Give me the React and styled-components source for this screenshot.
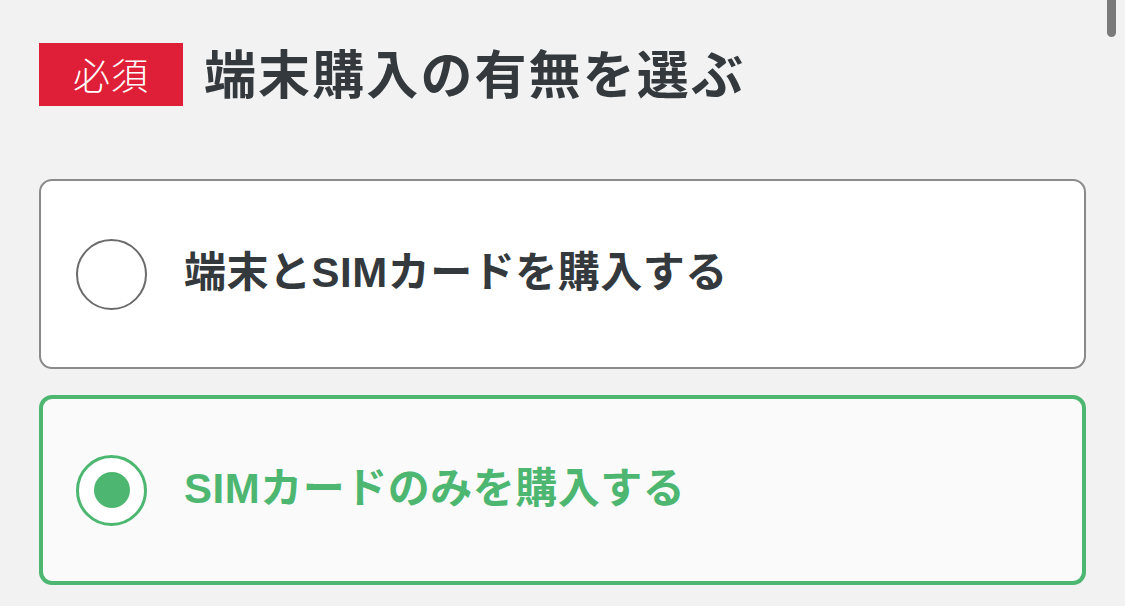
import React, { useState } from "react";
import styled, { createGlobalStyle, css } from "styled-components";

const GlobalStyle = createGlobalStyle`
  html, body { margin: 0; padding: 0; background: #f2f2f2; }
  body { font-family: "Liberation Sans", "Noto Sans CJK JP", sans-serif; }
  * { box-sizing: border-box; }
`;

const Page = styled.div`
  width: 1125px;
  height: 606px;
  overflow: hidden;
  background: #f2f2f2;
  padding: 43px 39px 0;
  position: relative;
  display: flex;
  flex-direction: column;
`;

const Header = styled.div`
  display: flex;
  align-items: center;
  gap: 21px;
  height: 63px;
  margin-bottom: 73px;
`;

const Badge = styled.span`
  width: 144px;
  height: 63px;
  background: #df1f37;
  color: #fff;
  font-family: "Noto Sans CJK JP", sans-serif;
  font-size: 37px;
  font-weight: 300;
  display: flex;
  align-items: center;
  justify-content: center;
  letter-spacing: 1px;
  line-height: 1;
`;

const Title = styled.h2`
  margin: -6px 0 0;
  font-family: "Noto Sans CJK JP", sans-serif;
  font-size: 52px;
  font-weight: 700;
  color: #33393d;
  letter-spacing: 2.1px;
  line-height: 1;
`;

const List = styled.div`
  display: flex;
  flex-direction: column;
  gap: 26px;
`;

const Option = styled.label`
  height: 190px;
  display: flex;
  align-items: center;
  gap: 37px;
  padding-left: 35px;
  border-radius: 13px;
  cursor: pointer;
  ${(p) =>
    p.$selected
      ? css`
          background: #fafafa;
          border: 4px solid #4db771;
          padding-left: 33px;
        `
      : css`
          background: #ffffff;
          border: 2px solid #8a8a8a;
        `}
`;

const Radio = styled.span`
  width: 71px;
  height: 71px;
  flex: none;
  border-radius: 50%;
  display: flex;
  align-items: center;
  justify-content: center;
  border: ${(p) => (p.$selected ? "3px solid #4db771" : "2.5px solid #6b6b6b")};
  background: #fff;
`;

const Dot = styled.span`
  width: 36px;
  height: 36px;
  border-radius: 50%;
  background: #4db771;
`;

const Label = styled.span`
  font-family: "Liberation Sans", "Noto Sans CJK JP", sans-serif;
  font-size: 42px;
  font-weight: 700;
  line-height: 1;
  letter-spacing: 0.5px;
  margin-top: -3px;
  color: ${(p) => (p.$selected ? "#4db771" : "#33393d")};
`;

const Scrollbar = styled.div`
  position: absolute;
  top: 0;
  left: 1107px;
  width: 9px;
  height: 37px;
  background: #7a7a7a;
  border-radius: 0 0 5px 5px;
`;

const options = [
  { id: "device", label: "端末とSIMカードを購入する" },
  { id: "sim", label: "SIMカードのみを購入する" },
];

export default function App() {
  const [value, setValue] = useState("sim");
  return (
    <>
      <GlobalStyle />
      <Page>
        <Header>
          <Badge>必須</Badge>
          <Title>端末購入の有無を選ぶ</Title>
        </Header>
        <List>
          {options.map((o) => {
            const sel = value === o.id;
            return (
              <Option key={o.id} $selected={sel} onClick={() => setValue(o.id)}>
                <Radio $selected={sel}>{sel && <Dot />}</Radio>
                <Label $selected={sel}>{o.label}</Label>
              </Option>
            );
          })}
        </List>
        <Scrollbar />
      </Page>
    </>
  );
}
